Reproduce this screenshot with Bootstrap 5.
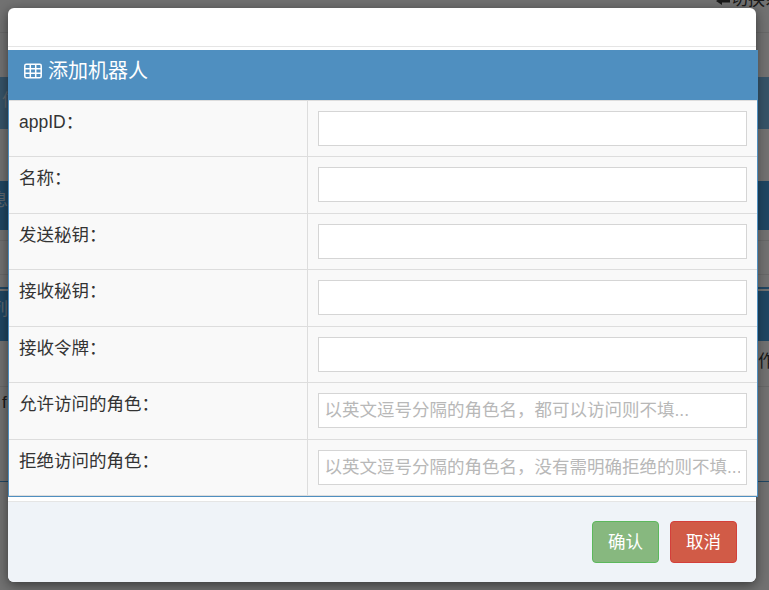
<!DOCTYPE html>
<html lang="zh-CN">
<head>
  <meta charset="UTF-8" />
  <meta name="viewport" content="width=device-width, initial-scale=1.0" />
  <title>添加机器人</title>
  <link href="https://cdn.jsdelivr.net/npm/bootstrap@5.3.0/dist/css/bootstrap.min.css" rel="stylesheet">
  <style>
    body {
      font-family: "Liberation Sans", "Noto Sans CJK SC", sans-serif;
      background-color: #e2e2e2;
      color: #333;
      overflow: hidden;
    }

    /* page behind the dialog */
    .page-top {
      height: 41px;
      border-bottom: 1px solid #d0d0d0;
      font-size: 17px;
      line-height: 16px;
      margin-top: -8px;
      white-space: nowrap;
    }

    .page-top-link { margin-right: -30px; }

    .page-gap-a { height: 44px; }
    .page-gap-b { height: 52px; }

    .page-gap-c {
      height: 61px;
      padding-top: 10px;
    }

    .page-gap-c-box {
      height: 35px;
      border-top: 1px solid #cfcfcf;
      border-bottom: 1px solid #cfcfcf;
    }

    .page-gap-c-line {
      height: 2px;
      margin-top: 12px;
      background-color: #3f8cc4;
    }

    .page-bar {
      color: #bcd;
      font-size: 17px;
    }

    .page-bar-a { height: 52px; line-height: 48px; background-color: #6ca6cf; }
    .page-bar-b { height: 49px; line-height: 40px; background-color: #3f8cc4; }
    .page-bar-c { height: 50px; line-height: 38px; background-color: #3f8cc4; }

    .page-gap-d {
      height: 46px;
      border-bottom: 1px solid #cfcfcf;
      font-size: 17px;
      line-height: 42px;
    }

    .page-gap-e {
      height: 95px;
      border-bottom: 1px solid #3f8cc4;
      font-size: 17px;
      line-height: 32px;
    }

    .page-text-a { margin-left: 2px; }
    .page-text-l { margin-left: -9px; }
    .page-text-r { margin-right: -6px; }

    /* dialog */
    .robot-dialog {
      max-width: 748px;
      margin: 8px;
    }

    .robot-content {
      border: 0;
      border-radius: 6px;
      box-shadow: 0 3px 12px rgba(0, 0, 0, .5);
      overflow: visible;
    }

    .robot-head {
      height: 39px;
      border-bottom: 1px solid #e5e5e5;
      margin-bottom: 3px;
    }

    .robot-panel {
      width: 750px;
      border: 1px solid #4f8fc0;
      border-top: 0;
      background-color: #f9f9f9;
    }

    .robot-title {
      height: 50px;
      background-color: #4f8fc0;
      color: #fff;
      font-size: 20px;
      margin: 0 -1px;
      padding: 0 0 8px 16px;
      gap: 6px;
    }

    .robot-table {
      margin: 0;
      table-layout: fixed;
      --bs-table-bg: #f9f9f9;
      --bs-table-border-color: #ddd;
      border-color: #ddd;
    }

    .robot-table > tbody > tr > td {
      padding: 10px;
      font-size: 17.500px;
      line-height: 22px;
      color: #333;
      height: 56.450px;
      vertical-align: top;
    }

    .robot-table > tbody > tr:first-child > td { border-top: 0; }
    .robot-table > tbody > tr:last-child > td { border-bottom: 0; }
    .robot-table > tbody > tr > td:first-child { border-left: 0; width: 298px; }
    .robot-table > tbody > tr > td:last-child { border-right: 0; }

    .robot-input {
      display: block;
      width: 100%;
      height: 35px;
      padding: 5px 6px;
      border: 1px solid #d5d5d5;
      border-radius: 0;
      background-color: #fff;
      font-size: 17.500px;
      line-height: 21px;
      color: #333;
    }

    .robot-input::placeholder { color: #b8b8b8; }

    .robot-foot {
      height: 81px;
      margin-top: 4px;
      border-top: 1px solid #e5e5e5;
      background-color: #eff3f8;
      border-radius: 0 0 6px 6px;
      padding: 19px 19px 0 0;
      gap: 11px;
    }

    .robot-btn {
      width: 67px;
      height: 42px;
      padding: 0;
      border-radius: 4px;
      color: #fff;
      font-size: 17.500px;
    }

    .robot-ok { background-color: #87b87f; border: 1px solid #5cb85c; }
    .robot-no { background-color: #d15b47; border: 1px solid #d43f3a; }
  </style>
</head>
<body>
  <!-- page under the backdrop, only the edges show -->
  <div class="page-top d-flex justify-content-end">
    <span class="page-top-link"><svg width="16" height="10" viewBox="0 0 16 10"><path d="M1 5 7 1v2.500h8v3H7V9z" fill="#333"/></svg>切换系统</span>
  </div>
  <div class="page-gap-a"></div>
  <div class="page-bar page-bar-a d-flex"><span class="page-text-a">信</span></div>
  <div class="page-gap-b"></div>
  <div class="page-bar page-bar-b d-flex"><span class="page-text-l">息</span></div>
  <div class="page-gap-c">
    <div class="page-gap-c-box"></div>
    <div class="page-gap-c-line"></div>
  </div>
  <div class="page-bar page-bar-c d-flex"><span class="page-text-l">列</span></div>
  <div class="page-gap-d d-flex justify-content-between"><span class="page-text-l">：</span><span class="page-text-r">作</span></div>
  <div class="page-gap-e d-flex"><span class="page-text-a">f</span></div>

  <div class="modal-backdrop show"></div>

  <div class="modal d-block">
    <div class="modal-dialog robot-dialog">
      <div class="modal-content robot-content">
        <div class="robot-head"></div>
        <div class="robot-panel">
          <div class="robot-title d-flex align-items-center">
            <svg width="18" height="16" viewBox="0 0 18 16" fill="none" stroke="#fff" stroke-width="1.500">
              <rect x=".8" y="1.200" width="16.400" height="13.600" rx="1.500"/>
              <path d="M.8 5.800h16.400M.8 10.300h16.400M6.300 1.200v13.600M11.700 1.200v13.600"/>
            </svg>
            <span>添加机器人</span>
          </div>
          <table class="table table-bordered robot-table">
            <tbody>
              <tr><td>appID：</td><td><input class="robot-input" type="text"></td></tr>
              <tr><td>名称：</td><td><input class="robot-input" type="text"></td></tr>
              <tr><td>发送秘钥：</td><td><input class="robot-input" type="text"></td></tr>
              <tr><td>接收秘钥：</td><td><input class="robot-input" type="text"></td></tr>
              <tr><td>接收令牌：</td><td><input class="robot-input" type="text"></td></tr>
              <tr><td>允许访问的角色：</td><td><input class="robot-input" type="text" placeholder="以英文逗号分隔的角色名，都可以访问则不填..."></td></tr>
              <tr><td>拒绝访问的角色：</td><td><input class="robot-input" type="text" placeholder="以英文逗号分隔的角色名，没有需明确拒绝的则不填..."></td></tr>
            </tbody>
          </table>
        </div>
        <div class="robot-foot d-flex justify-content-end">
          <button type="button" class="btn robot-btn robot-ok">确认</button>
          <button type="button" class="btn robot-btn robot-no">取消</button>
        </div>
      </div>
    </div>
  </div>

  <script src="https://cdn.jsdelivr.net/npm/bootstrap@5.3.0/dist/js/bootstrap.bundle.min.js"></script>
</body>
</html>
